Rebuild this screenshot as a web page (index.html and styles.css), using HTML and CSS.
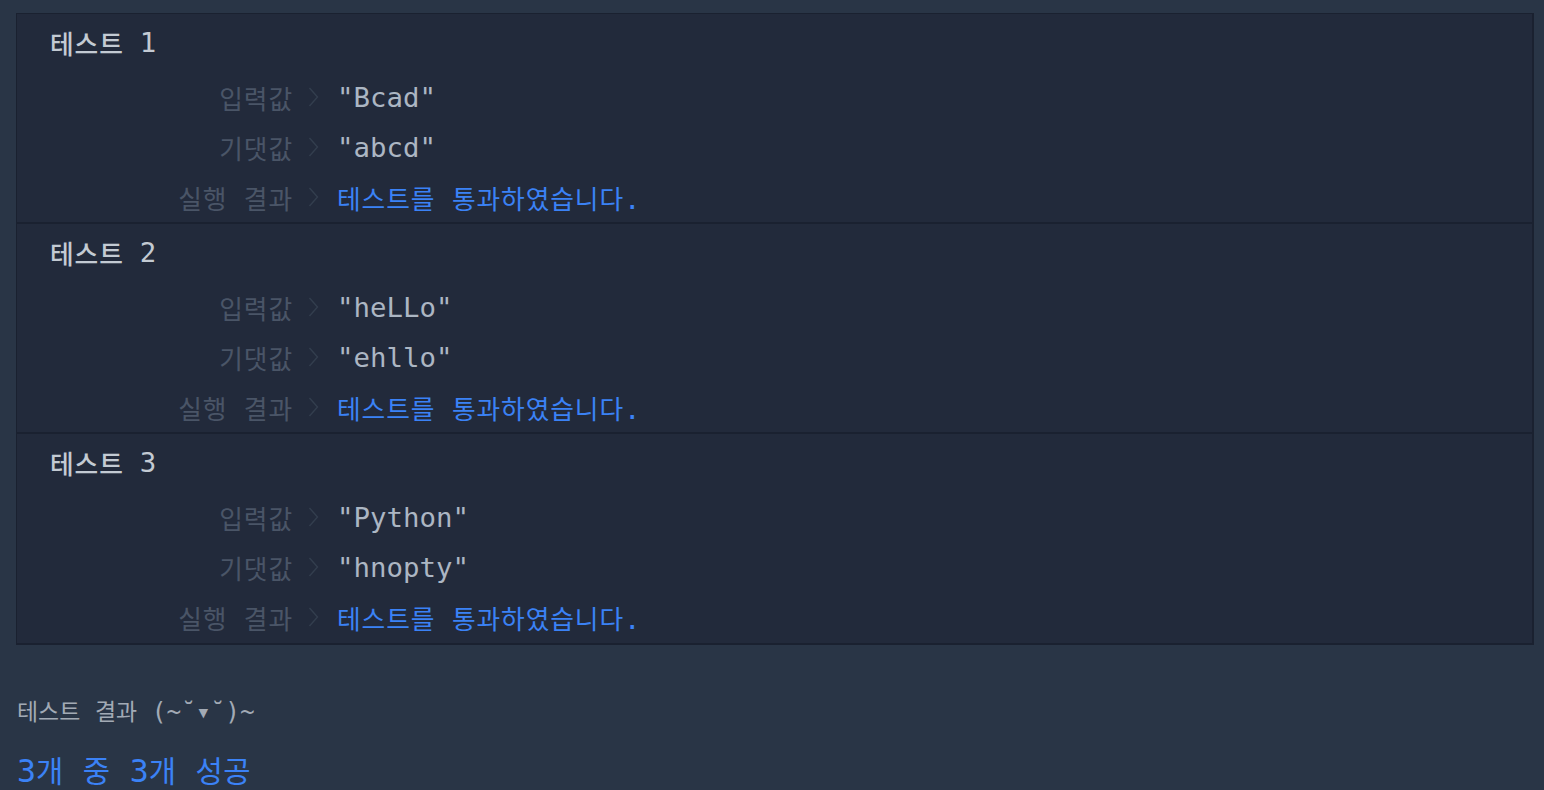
FILE: index.html
```html
<!DOCTYPE html>
<html lang="ko">
<head>
<meta charset="utf-8">
<title>테스트 결과</title>
<link rel="stylesheet" href="styles.css">
</head>
<body>
<div class="results">
  <section class="case">
    <div class="case-title"><span class="ko">테스트</span> 1</div>
    <div class="row"><span class="label"><span class="ko">입력값</span></span><svg class="chev" viewBox="0 0 11 20"><polyline points="1.5,1 9.5,10 1.5,19"/></svg><span class="value">"Bcad"</span></div>
    <div class="row"><span class="label"><span class="ko">기댓값</span></span><svg class="chev" viewBox="0 0 11 20"><polyline points="1.5,1 9.5,10 1.5,19"/></svg><span class="value">"abcd"</span></div>
    <div class="row"><span class="label"><span class="ko">실행</span> <span class="ko">결과</span></span><svg class="chev" viewBox="0 0 11 20"><polyline points="1.5,1 9.5,10 1.5,19"/></svg><span class="value pass"><span class="ko">테스트를</span> <span class="ko">통과하였습니다</span>.</span></div>
  </section>
  <section class="case">
    <div class="case-title"><span class="ko">테스트</span> 2</div>
    <div class="row"><span class="label"><span class="ko">입력값</span></span><svg class="chev" viewBox="0 0 11 20"><polyline points="1.5,1 9.5,10 1.5,19"/></svg><span class="value">"heLLo"</span></div>
    <div class="row"><span class="label"><span class="ko">기댓값</span></span><svg class="chev" viewBox="0 0 11 20"><polyline points="1.5,1 9.5,10 1.5,19"/></svg><span class="value">"ehllo"</span></div>
    <div class="row"><span class="label"><span class="ko">실행</span> <span class="ko">결과</span></span><svg class="chev" viewBox="0 0 11 20"><polyline points="1.5,1 9.5,10 1.5,19"/></svg><span class="value pass"><span class="ko">테스트를</span> <span class="ko">통과하였습니다</span>.</span></div>
  </section>
  <section class="case">
    <div class="case-title"><span class="ko">테스트</span> 3</div>
    <div class="row"><span class="label"><span class="ko">입력값</span></span><svg class="chev" viewBox="0 0 11 20"><polyline points="1.5,1 9.5,10 1.5,19"/></svg><span class="value">"Python"</span></div>
    <div class="row"><span class="label"><span class="ko">기댓값</span></span><svg class="chev" viewBox="0 0 11 20"><polyline points="1.5,1 9.5,10 1.5,19"/></svg><span class="value">"hnopty"</span></div>
    <div class="row"><span class="label"><span class="ko">실행</span> <span class="ko">결과</span></span><svg class="chev" viewBox="0 0 11 20"><polyline points="1.5,1 9.5,10 1.5,19"/></svg><span class="value pass"><span class="ko">테스트를</span> <span class="ko">통과하였습니다</span>.</span></div>
  </section>
</div>
<div class="summary-head"><span class="ko">테스트</span> <span class="ko">결과</span> (~˘▾˘)~</div>
<div class="summary"><span>3</span><span class="ko">개</span> <span class="ko">중</span> <span>3</span><span class="ko">개</span> <span class="ko">성공</span></div>
</body>
</html>
```

FILE: styles.css
```css
html, body {
  margin: 0;
  padding: 0;
}
body {
  background: #293546;
  padding: 13px 10px 0 16px;
  font-family: "DejaVu Sans Mono", "Liberation Mono", "Noto Sans CJK KR", monospace;
  font-size: 27.4px;
  color: #b3bdc9;
  height: 790px;
  box-sizing: border-box;
  overflow: hidden;
}
.ko {
  font-family: "Noto Sans CJK KR", "Noto Sans", sans-serif;
  font-size: 0.94em;
  letter-spacing: 0.035em;
}
.results {
  background: #222a3b;
  border: 1px solid #1a2130;
  border-bottom-width: 2px;
  border-right-width: 2px;
}
.case {
  height: 210px;
  box-sizing: border-box;
  padding-left: 33px;
  border-bottom: 2px solid #1a2130;
}
.case:last-child {
  border-bottom: none;
  height: 209px;
}
.case-title {
  height: 56px;
  display: flex;
  align-items: center;
  color: #c3cad3;
  font-weight: 500;
}
.case-title .ko {
  font-weight: 500;
  margin-right: 16px;
}
.row {
  height: 50px;
  display: flex;
  align-items: center;
  margin-left: -33px;
}
.case-title + .row {
  margin-top: 2px;
}
.label {
  width: 276px;
  text-align: right;
  color: #4a5567;
  white-space: pre;
}
.chev {
  width: 11px;
  height: 20px;
  margin-left: 15px;
  margin-right: 18px;
  fill: none;
  stroke: #333e4e;
  stroke-width: 1.4;
}
.value {
  white-space: pre;
  color: #acb6c3;
}
.value.pass {
  color: #3b82f6;
}
.summary-head {
  margin-top: 50px;
  height: 30px;
  line-height: 30px;
  font-size: 24.4px;
  color: #a2aab5;
  margin-left: 1px;
  white-space: pre;
}
.summary-head .ko {
  letter-spacing: 0;
}
.summary {
  margin-top: 25px;
  height: 40px;
  line-height: 40px;
  font-size: 31.6px;
  color: #3b82f6;
  margin-left: 1px;
  white-space: pre;
}
.summary .ko {
  letter-spacing: 0.015em;
}
```
